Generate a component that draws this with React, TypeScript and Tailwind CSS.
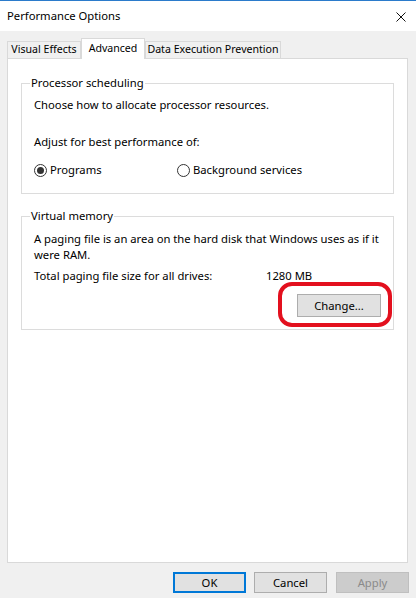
import React from "react";

const tabs = [
  { label: "Visual Effects", w: "w-[74px]", active: false },
  { label: "Advanced", w: "w-[64px]", active: true },
  { label: "Data Execution Prevention", w: "w-[136px]", active: false },
];

function Radio({ checked, label }: { checked?: boolean; label: string }) {
  return (
    <label className="flex items-center gap-[3px] h-[16px]">
      <span className="w-[13px] h-[13px] rounded-full border border-[#333333] bg-white flex items-center justify-center">
        {checked && <span className="w-[7px] h-[7px] rounded-full bg-[#333333]" />}
      </span>
      <span>{label}</span>
    </label>
  );
}

function WinButton({
  children,
  variant = "normal",
  className = "",
}: {
  children: React.ReactNode;
  variant?: "normal" | "default" | "disabled";
  className?: string;
}) {
  const styles =
    variant === "default"
      ? "bg-[#e1e1e1] border-2 border-[#0078d7] text-black"
      : variant === "disabled"
      ? "bg-[#cccccc] border border-[#bfbfbf] text-[#8a8a8a]"
      : "bg-[#e1e1e1] border border-[#adadad] text-black";
  return (
    <button className={`flex items-center justify-center leading-none ${styles} ${className}`}>
      {children}
    </button>
  );
}

export default function App() {
  return (
    <div className="w-[416px] h-[598px] bg-[#f0f0f0] flex flex-col overflow-hidden whitespace-nowrap text-[11.25px] text-black font-['Noto_Sans',sans-serif]">
      {/* TITLE BAR */}
      <div className="h-[31px] shrink-0 bg-white border-t border-[#2b7bcb] flex items-center justify-between pl-[7px] pr-[10px]">
        <span className="leading-none text-[11.25px]">Performance Options</span>
        <svg width="10" height="10" viewBox="0 0 10 10" className="mt-[1px]">
          <path d="M0.5 0.5 L9.5 9.5 M9.5 0.5 L0.5 9.5" stroke="#111" strokeWidth="1" />
        </svg>
      </div>

      {/* TABS */}
      <div className="pt-[7px] pl-[7px] h-[27px] shrink-0 flex items-end text-[10.6px]">
        {tabs.map((t) =>
          t.active ? (
            <div
              key={t.label}
              className={`${t.w} h-[21px] relative z-10 translate-y-[1px] bg-white border border-b-0 border-[#d9d9d9] flex items-start justify-center pt-[2px]`}
            >
              {t.label}
            </div>
          ) : (
            <div
              key={t.label}
              className={`${t.w} h-[17px] bg-[#f0f0f0] border border-b-0 border-[#d9d9d9] flex items-center justify-center`}
            >
              {t.label}
            </div>
          )
        )}
      </div>

      {/* PANEL */}
      <div className="flex-1 ml-[7px] w-[401px] bg-white border border-[#d9d9d9] px-[13px] pt-[16px]">
        <fieldset className="border border-[#dcdcdc] px-[12px] pb-[15px]">
          <legend className="ml-[-4px] px-[1px] leading-[16px]">Processor scheduling</legend>
          <p className="mt-[6px] leading-[16px]">Choose how to allocate processor resources.</p>
          <p className="mt-[21px] leading-[16px]">Adjust for best performance of:</p>
          <div className="mt-[12px] flex">
            <div className="w-[143px]">
              <Radio checked label="Programs" />
            </div>
            <Radio label="Background services" />
          </div>
        </fieldset>

        <fieldset className="mt-[14px] border border-[#dcdcdc] pl-[12px] pr-[12px] pb-[12px]">
          <legend className="ml-[-4px] px-[1px] leading-[16px]">Virtual memory</legend>
          <p className="mt-[7px] leading-[16px]">
            A paging file is an area on the hard disk that Windows uses as if it
            <br />
            were RAM.
          </p>
          <div className="mt-[5px] flex leading-[16px]">
            <span className="w-[232px]">Total paging file size for all drives:</span>
            <span>1280 MB</span>
          </div>
          <div className="mt-[10px] flex justify-end">
            <div className="relative">
              <WinButton className="w-[84px] h-[23px]">Change...</WinButton>
              {/* red highlight annotation */}
              <div className="absolute left-[-19px] top-[-12px] w-[114px] h-[45px] border-[4px] border-[#e3101e] rounded-[14px] pointer-events-none" />
            </div>
          </div>
        </fieldset>
      </div>

      {/* BOTTOM BUTTONS */}
      <div className="h-[35px] shrink-0 pt-[9px] pr-[7px] flex justify-end items-start gap-[8px]">
        <WinButton variant="default" className="w-[73px] h-[21px]">OK</WinButton>
        <WinButton className="w-[73px] h-[21px]">Cancel</WinButton>
        <WinButton variant="disabled" className="w-[73px] h-[21px] ml-[1px]">Apply</WinButton>
      </div>
    </div>
  );
}
